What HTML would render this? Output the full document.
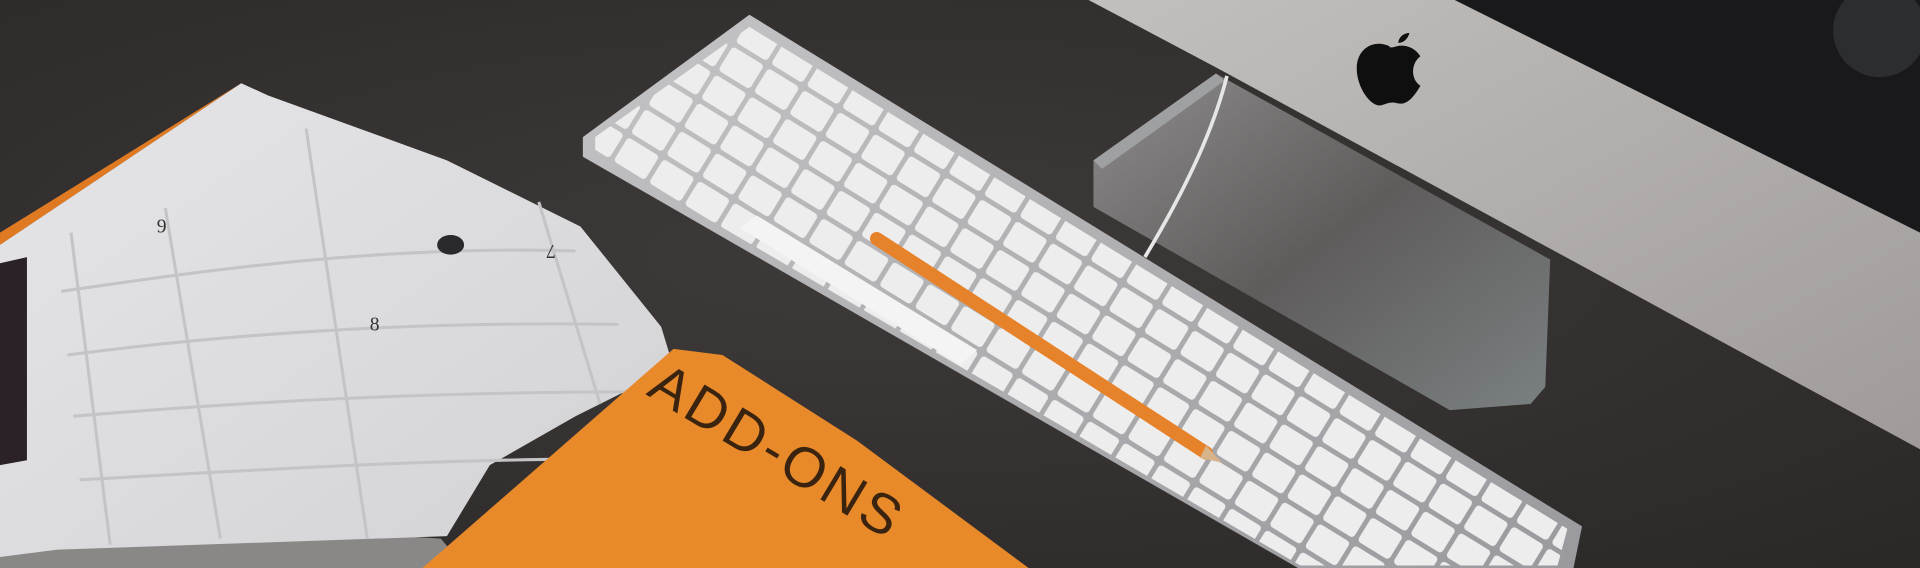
<!DOCTYPE html>
<html><head><meta charset="utf-8"><style>
html,body{margin:0;padding:0;background:#343131;}
svg{display:block}
</style></head><body>
<svg width="1920" height="568" viewBox="0 0 1568 464" preserveAspectRatio="none" xmlns="http://www.w3.org/2000/svg">
<defs>
<radialGradient id="bg" cx="0.45" cy="0.45" r="0.8">
<stop offset="0" stop-color="#3e3a39"/><stop offset="1" stop-color="#2a2727"/>
</radialGradient>
<linearGradient id="kb" x1="0" y1="0" x2="1" y2="1">
<stop offset="0" stop-color="#c4c4c6"/><stop offset="1" stop-color="#9a9a9e"/>
</linearGradient>
<pattern id="keys" width="34" height="27" patternUnits="userSpaceOnUse" patternTransform="translate(612,12) rotate(31.6)">
<rect x="2" y="2" width="30" height="23" rx="3" fill="#ededed"/>
</pattern>
<linearGradient id="chin" x1="0" y1="0" x2="1" y2="1">
<stop offset="0" stop-color="#c2bfbd"/><stop offset="1" stop-color="#a09b9a"/>
</linearGradient>
<linearGradient id="stand" x1="0" y1="0" x2="1" y2="1">
<stop offset="0" stop-color="#8e8c8c"/><stop offset="0.5" stop-color="#5f5c5c"/><stop offset="1" stop-color="#7a8080"/>
</linearGradient>
<linearGradient id="map" x1="0" y1="0" x2="1" y2="1">
<stop offset="0" stop-color="#e6e6e8"/><stop offset="1" stop-color="#d2d2d4"/>
</linearGradient>
</defs>
<rect width="1568" height="464" fill="url(#bg)"/>
<polygon points="1188,0 1568,0 1568,190" fill="#19191c"/>
<ellipse cx="1535" cy="25" rx="38" ry="38" fill="#2c2d31"/>
<polygon points="893,131 993,60 1266,212 1262,316 1250,330 1184,335 893,169" fill="url(#stand)"/>
<polygon points="893,131 993,60 1000,66 900,138" fill="#9fa0a2"/>
<path d="M1002,62 C990,110 965,160 935,210" stroke="#e6e6e6" stroke-width="3" fill="none"/>
<polygon points="889,0 1188,0 1568,190 1568,367 993,55" fill="url(#chin)"/>
<path d="M1135,38 C1124,32 1108,38 1108,56 C1108,72 1120,88 1128,86 C1132,85 1135,83 1140,84 C1146,86 1152,84 1160,70 C1152,65 1152,52 1160,46 C1155,38 1146,36 1140,38 C1137,39 1134,39 1135,38 Z M1142,35 C1142,31 1146,27 1151,27 C1150,31 1147,35 1142,35 Z" fill="#0f0f10"/>
<polygon points="476,112 612,12 1292,430 1285,464 1060,464 476,128" fill="url(#kb)"/>
<clipPath id="kc"><polygon points="486,112 612,22 1280,432 1272,462 1062,462 486,125"/></clipPath>
<rect width="1568" height="464" fill="url(#keys)" clip-path="url(#kc)"/>
<polygon points="604,186 618,176 798,286 784,298" fill="#f4f4f4"/>
<line x1="716" y1="195" x2="985" y2="370" stroke="#e6822a" stroke-width="11" stroke-linecap="round"/>
<polygon points="985,364 998,378 980,374" fill="#d8b48a"/>
<polygon points="0,190 197,68 0,200" fill="#e07a22"/>
<polygon points="0,440 40,420 360,440 380,464 0,464" fill="#8a8887"/>
<polygon points="0,200 197,68 219,78 365,131 474,185 540,267 550,300 470,340 400,380 365,438 47,449 0,455" fill="url(#map)"/>
<polygon points="0,215 22,210 22,376 0,380" fill="#2a2129"/>
<g stroke="#c4c4c6" stroke-width="2.5" fill="none">
<path d="M50,238 C160,222 310,200 470,205"/>
<path d="M55,290 C170,275 320,262 505,265"/>
<path d="M60,340 C180,330 330,320 530,320"/>
<path d="M65,392 C190,385 330,376 475,375"/>
<path d="M58,190 L90,445"/><path d="M135,170 L180,440"/><path d="M250,105 L300,440"/><path d="M440,165 L490,330"/>
</g>
<g font-family="Liberation Serif, serif" font-size="16" fill="#333">
<text x="128" y="190">9</text><text x="302" y="270">8</text><text x="440" y="210" transform="rotate(180 447 205)">7</text>
</g>
<ellipse cx="368" cy="200" rx="11" ry="8" fill="#2a2a2c"/>
<polygon points="345,464 550,285 590,290 700,360 840,464" fill="#e8892a"/>
<text x="0" y="0" transform="translate(527,322) rotate(31)" font-family="Liberation Sans, sans-serif" font-size="46" fill="#3a2410" letter-spacing="3">ADD-ONS</text>
</svg>
</body></html>
